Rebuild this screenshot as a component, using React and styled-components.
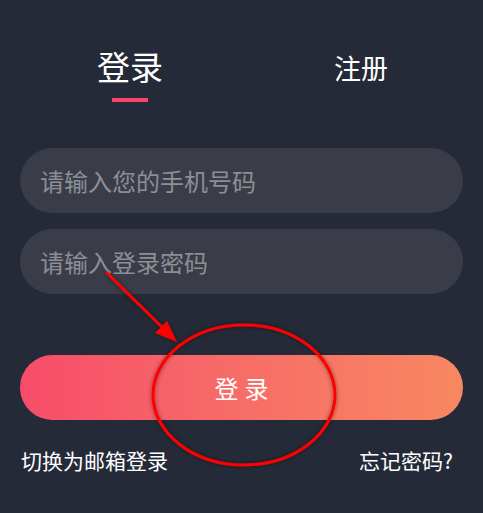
import React from 'react';
import styled, {createGlobalStyle} from 'styled-components';

const GlobalStyle = createGlobalStyle`
    html, body {
        margin: 0;
        padding: 0;
        background: #252a38;
    }
    body {
        font-family: "Noto Sans CJK SC", "Noto Sans", sans-serif;
    }
`;

const Page = styled.div`
    position: relative;
    width: 483px;
    height: 513px;
    box-sizing: border-box;
    padding: 0 20px;
    background: #252a38;
    overflow: hidden;
`;

const Tabs = styled.div`
    display: flex;
    justify-content: space-between;
    align-items: flex-start;
    padding: 46px 75px 0 77px;
`;

const Tab = styled.div`
    display: flex;
    flex-direction: column;
    align-items: center;
    margin-top: ${props => props.active ? '0' : '6px'};
`;

const TabLabel = styled.div`
    color: #fff;
    font-size: ${props => props.active ? '33px' : '27px'};
    line-height: ${props => props.active ? '40px' : '32px'};
`;

const TabLine = styled.div`
    width: 36px;
    height: 4px;
    margin-top: 12px;
    background: ${props => props.active ? '#f5476a' : 'transparent'};
`;

const Form = styled.div`
    display: flex;
    flex-direction: column;
    gap: 16px;
    margin-top: 46px;
`;

const Field = styled.input`
    height: 65px;
    box-sizing: border-box;
    width: 100%;
    border: none;
    outline: none;
    border-radius: 33px;
    padding: 0 20px;
    background: #3a3d48;
    color: #fff;
    font-family: inherit;
    font-size: 24px;

    &::placeholder {
        color: #8d8f96;
    }
`;

const Submit = styled.button`
    display: block;
    width: 100%;
    height: 65px;
    margin-top: 61px;
    border: none;
    border-radius: 33px;
    background: linear-gradient(90deg, #f74c6a 0%, #f76a68 45%, #f88861 100%);
    color: #fff;
    font-family: inherit;
    font-size: 24px;
    letter-spacing: 6px;
    text-indent: 6px;
`;

const Links = styled.div`
    display: flex;
    justify-content: space-between;
    margin-top: 25px;
    padding: 0 10px 0 1px;
`;

const LinkText = styled.span`
    color: #fff;
    font-size: 21px;
    line-height: 30px;
`;

const Overlay = styled.svg`
    position: absolute;
    left: 0;
    top: 0;
    pointer-events: none;
`;

export default function App() {
    return (
        <Page>
            <GlobalStyle/>
            <Tabs>
                <Tab active>
                    <TabLabel active>登录</TabLabel>
                    <TabLine active/>
                </Tab>
                <Tab>
                    <TabLabel>注册</TabLabel>
                </Tab>
            </Tabs>
            <Form>
                <Field placeholder="请输入您的手机号码"/>
                <Field type="password" placeholder="请输入登录密码"/>
            </Form>
            <Submit>登录</Submit>
            <Links>
                <LinkText>切换为邮箱登录</LinkText>
                <LinkText>忘记密码?</LinkText>
            </Links>
            <Overlay width="483" height="513" viewBox="0 0 483 513">
                <defs>
                    <filter id="sh" x="-20%" y="-20%" width="140%" height="140%">
                        <feDropShadow dx="0" dy="0" stdDeviation="2" floodColor="#000" floodOpacity="0.5"/>
                    </filter>
                </defs>
                <g filter="url(#sh)">
                    <line x1="107" y1="273" x2="172" y2="337" stroke="#ff0000" strokeWidth="3" strokeLinecap="round"/>
                    <polygon points="177,342 155,333 167,321" fill="#ff0000"/>
                    <ellipse cx="244" cy="395" rx="91" ry="70" fill="none" stroke="#ff0000" strokeWidth="3"/>
                </g>
            </Overlay>
        </Page>
    );
}
